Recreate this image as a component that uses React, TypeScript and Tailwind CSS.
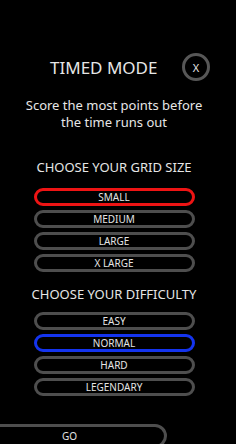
import { useState } from 'react';

const gridSizes = ['SMALL', 'MEDIUM', 'LARGE', 'X LARGE'];
const difficulties = ['EASY', 'NORMAL', 'HARD', 'LEGENDARY'];

type OptionProps = {
  label: string;
  selected: boolean;
  accent: 'red' | 'blue';
  onClick: () => void;
};

const Option = ({ label, selected, accent, onClick }: OptionProps) => {
  const border = selected
    ? accent === 'red'
      ? 'border-[#ee1414]'
      : 'border-[#1434ee]'
    : 'border-[#4e4e4e]';
  return (
    <button
      onClick={onClick}
      className={`w-[161px] h-[18px] mx-auto flex items-center justify-center rounded-full border-[3px] ${border} bg-black text-[10px] leading-none text-[#e4e4e4]`}
    >
      {label}
    </button>
  );
};

const App = () => {
  const [grid, setGrid] = useState('SMALL');
  const [difficulty, setDifficulty] = useState('NORMAL');

  return (
    <div
      className="w-[236px] h-[444px] overflow-hidden bg-black text-[#e6e6e6] flex flex-col"
      style={{ fontFamily: '"Noto Sans", "Open Sans", sans-serif' }}
    >
      {/* Header */}
      <div className="flex items-center mt-[53px] h-[28px]">
        <h1 className="ml-[50px] text-[17px] leading-none">TIMED MODE</h1>
        <button className="ml-auto mr-[26px] w-[28px] h-[28px] rounded-full border-[3px] border-[#575757] flex items-center justify-center text-[11px] leading-none text-[#e6e6e6]">
          X
        </button>
      </div>

      <div className="pr-[8px] flex flex-col">
        <p className="mt-[16px] text-center text-[13px] leading-[17px]">
          Score the most points before
          <br />
          the time runs out
        </p>

        {/* Grid size */}
        <h2 className="mt-[26px] text-center text-[13px] leading-[20px]">CHOOSE YOUR GRID SIZE</h2>
        <div className="mt-[11px] flex flex-col gap-[4px]">
          {gridSizes.map((g) => (
            <Option key={g} label={g} accent="red" selected={grid === g} onClick={() => setGrid(g)} />
          ))}
        </div>

        {/* Difficulty */}
        <h2 className="mt-[12px] text-center text-[13px] leading-[20px]">CHOOSE YOUR DIFFICULTY</h2>
        <div className="mt-[8px] flex flex-col gap-[4px]">
          {difficulties.map((d) => (
            <Option
              key={d}
              label={d}
              accent="blue"
              selected={difficulty === d}
              onClick={() => setDifficulty(d)}
            />
          ))}
        </div>
      </div>

      {/* Go */}
      <button className="mt-[28px] -ml-[28px] w-[195px] h-[24px] shrink-0 rounded-r-[12px] border-[3px] border-[#4e4e4e] flex items-center justify-center text-[10px] leading-none text-[#e4e4e4]">
        GO
      </button>
    </div>
  );
};

export default App;
